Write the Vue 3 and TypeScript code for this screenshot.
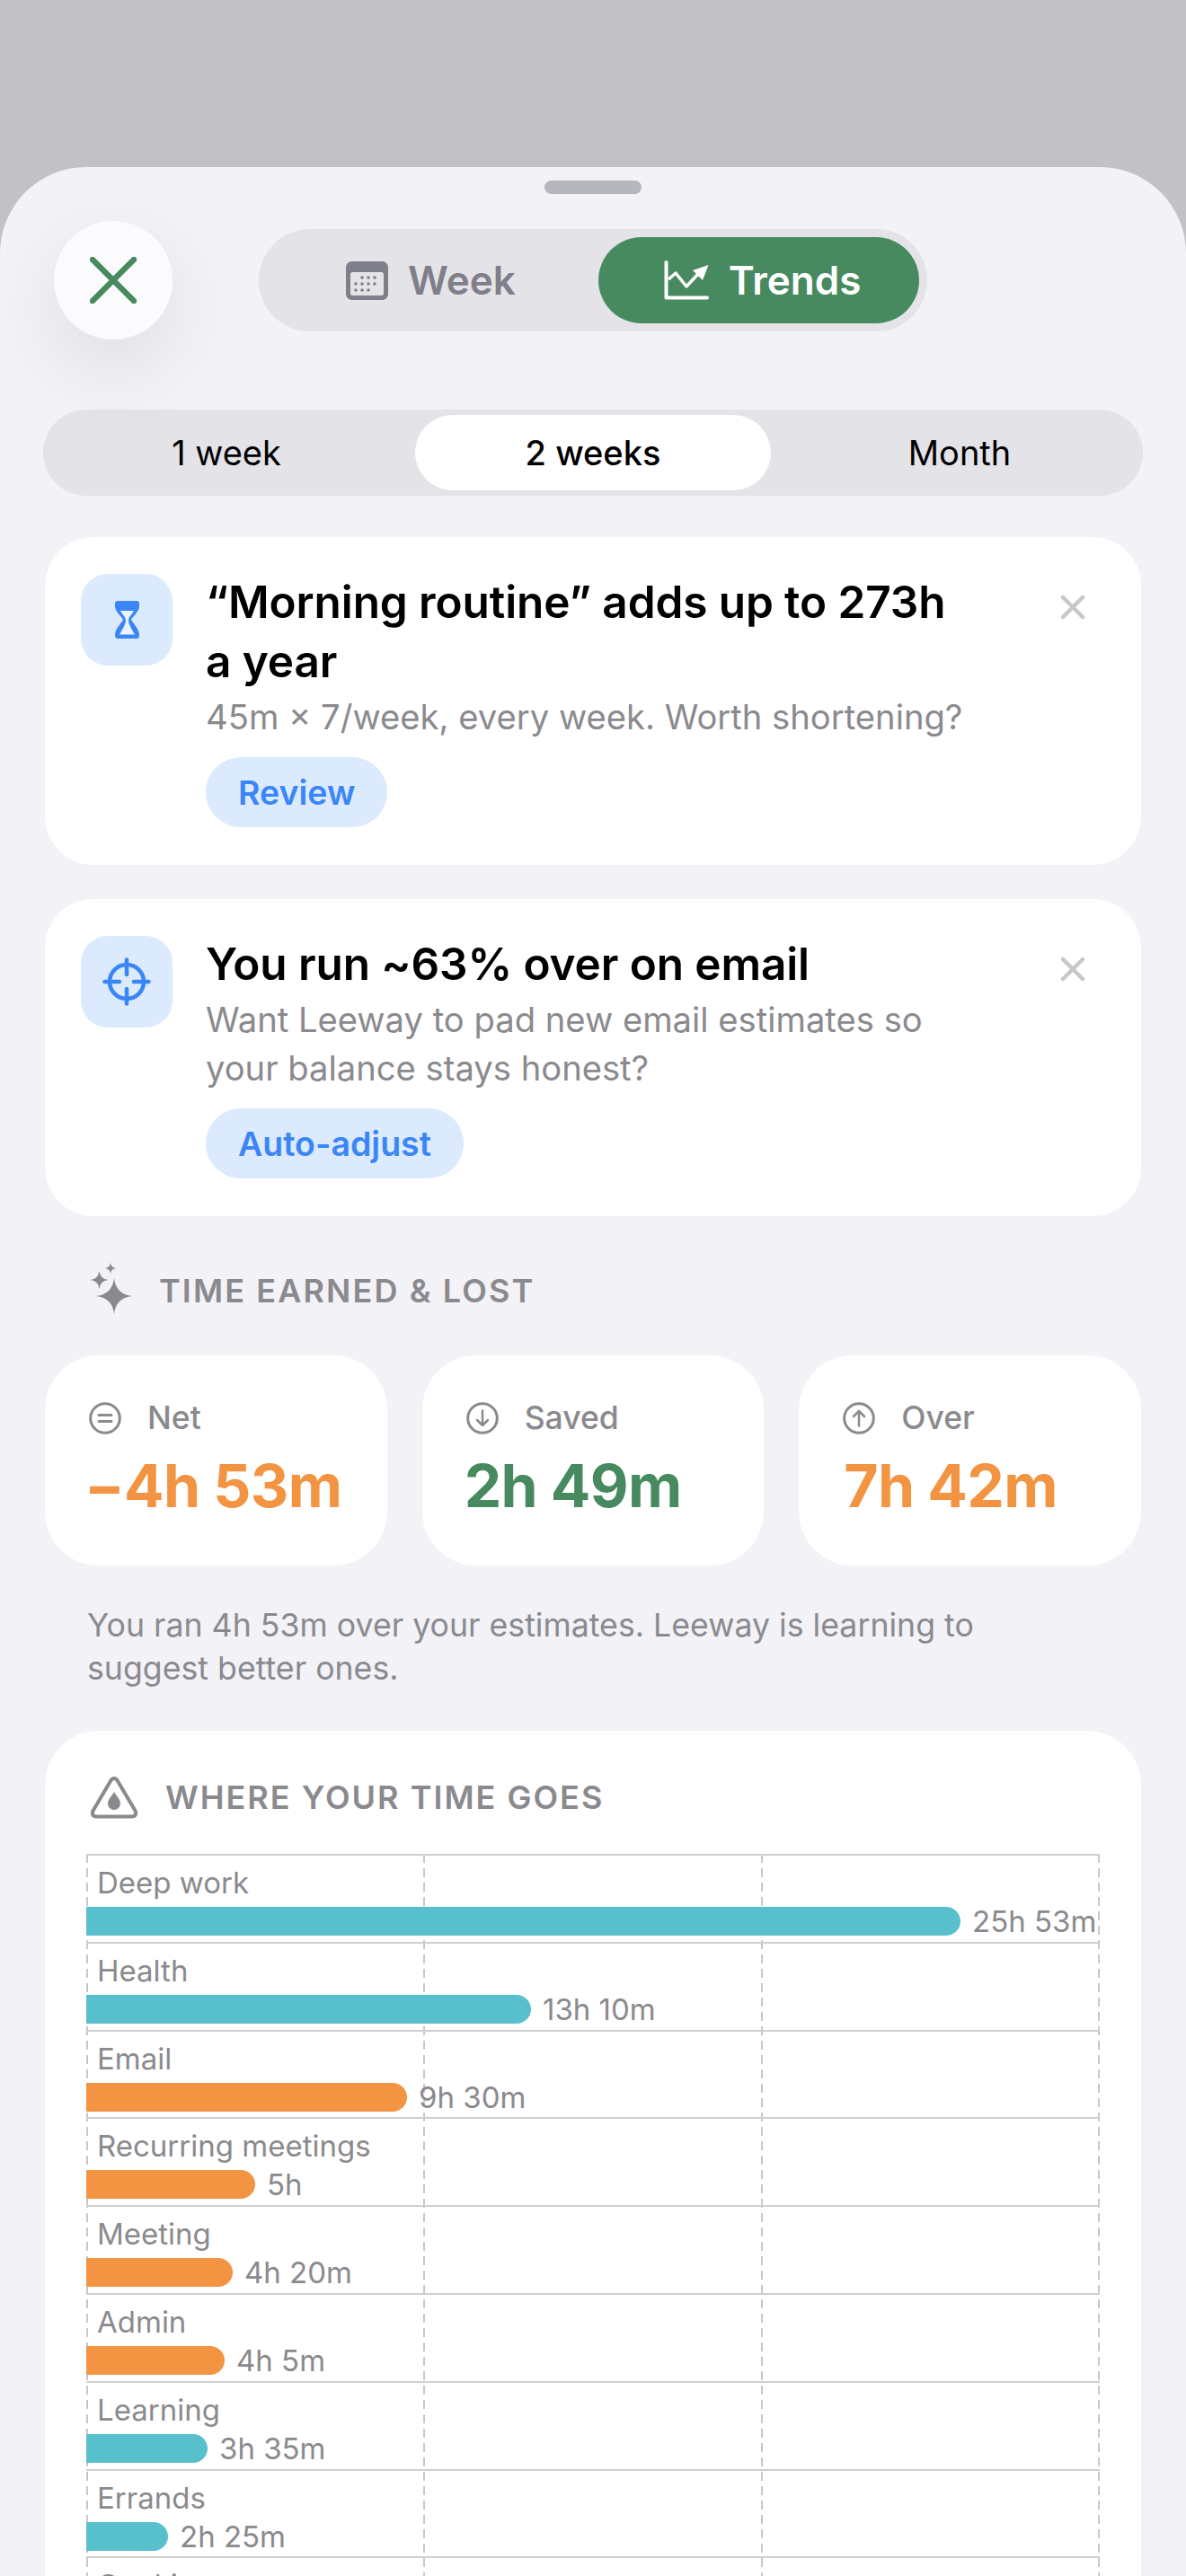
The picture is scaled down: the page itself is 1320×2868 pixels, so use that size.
<script setup lang="ts">
interface Row {
  label: string
  minutes: number
  value: string
  color: 'teal' | 'orange'
}

const rows: Row[] = [
  { label: 'Deep work', minutes: 1553, value: '25h 53m', color: 'teal' },
  { label: 'Health', minutes: 790, value: '13h 10m', color: 'teal' },
  { label: 'Email', minutes: 570, value: '9h 30m', color: 'orange' },
  { label: 'Recurring meetings', minutes: 300, value: '5h', color: 'orange' },
  { label: 'Meeting', minutes: 260, value: '4h 20m', color: 'orange' },
  { label: 'Admin', minutes: 245, value: '4h 5m', color: 'orange' },
  { label: 'Learning', minutes: 215, value: '3h 35m', color: 'teal' },
  { label: 'Errands', minutes: 145, value: '2h 25m', color: 'teal' },
  { label: 'Cooking', minutes: 120, value: '2h', color: 'teal' },
]

const ranges = ['1 week', '2 weeks', 'Month']

function barWidth(minutes: number) {
  return `${Math.round(minutes * 0.6266)}px`
}
</script>

<template>
  <div class="screen">
    <main class="sheet">
      <div class="handle"></div>

      <header class="top">
        <button type="button" class="close" aria-label="Close">
          <svg width="52" height="52" viewBox="0 0 52 52">
            <path d="M3 3 L49 49 M49 3 L3 49" stroke="#478a60" stroke-width="6.5" stroke-linecap="round" fill="none" />
          </svg>
        </button>
        <div class="view-switch">
          <button type="button" class="view-tab">
            <svg width="47" height="43" viewBox="0 0 47 43">
              <rect width="47" height="43" rx="6.5" fill="#7f7f8a" />
              <rect x="5" y="12" width="37" height="26" rx="2.5" fill="#e3e3e8" />
              <g fill="#7f7f8a">
                <circle cx="18" cy="18" r="1.8" />
                <circle cx="25" cy="18" r="1.8" />
                <circle cx="32" cy="18" r="1.8" />
                <circle cx="11" cy="25" r="1.8" />
                <circle cx="18" cy="25" r="1.8" />
                <circle cx="25" cy="25" r="1.8" />
                <circle cx="32" cy="25" r="1.8" />
                <circle cx="11" cy="32" r="1.8" />
                <circle cx="18" cy="32" r="1.8" />
                <circle cx="25" cy="32" r="1.8" />
              </g>
            </svg>
            Week
          </button>
          <button type="button" class="view-tab view-tab--active">
            <svg width="50" height="44" viewBox="0 0 50 44">
              <path d="M2.5 2 V41.500 H48" stroke="#fff" stroke-width="4" stroke-linecap="round" stroke-linejoin="round" fill="none" />
              <path d="M5 21 L13 14 L25 29 L38 15" stroke="#fff" stroke-width="3.5" stroke-linejoin="round" fill="none" />
              <path d="M32 11 L49.500 5 L43 22 Z" fill="#fff" />
            </svg>
            Trends
          </button>
        </div>
      </header>

      <div class="ranges">
        <button
          v-for="r in ranges"
          :key="r"
          type="button"
          class="range"
          :class="{ 'range--active': r === '2 weeks' }"
        >
          {{ r }}
        </button>
      </div>

      <section class="tip tip--first">
        <div class="tip-icon">
          <svg width="27" height="42" viewBox="0 0 27 42">
            <path d="M3 0 H24 Q27 0 27 3 V6 C27 12 20 17 18 21 C20 25 27 31 27 38 Q27 42 24 42 H3 Q0 42 0 38 C0 31 7 25 9 21 C7 17 0 12 0 6 V3 Q0 0 3 0 Z" fill="#3b86f7" />
            <path d="M6 11 H21 C19 15 15 18 15 21.500 C15 26 19 32 22 37.500 H5 C8 32 12 26 12 21.500 C12 18 8 15 6 11 Z" fill="#e9f2fe" />
          </svg>
        </div>
        <div class="tip-body">
          <h2 class="tip-title">“Morning routine” adds up to 273h a year</h2>
          <p class="tip-text">45m × 7/week, every week. Worth shortening?</p>
          <button type="button" class="tip-action">Review</button>
        </div>
        <svg class="tip-dismiss" width="28" height="28" viewBox="0 0 28 28">
          <path d="M3 3 L25 25 M25 3 L3 25" stroke="#c7c7cc" stroke-width="4.5" stroke-linecap="round" />
        </svg>
      </section>

      <section class="tip">
        <div class="tip-icon">
          <svg width="54" height="54" viewBox="0 0 54 54">
            <circle cx="27" cy="27" r="19" fill="none" stroke="#3b86f7" stroke-width="4.5" />
            <path d="M27 2.500 V19 M27 35 V51.500 M2.500 27 H19 M35 27 H51.500" stroke="#3b86f7" stroke-width="4.5" stroke-linecap="round" />
          </svg>
        </div>
        <div class="tip-body">
          <h2 class="tip-title">You run ~63% over on email</h2>
          <p class="tip-text">Want Leeway to pad new email estimates so your balance stays honest?</p>
          <button type="button" class="tip-action">Auto-adjust</button>
        </div>
        <svg class="tip-dismiss" width="28" height="28" viewBox="0 0 28 28">
          <path d="M3 3 L25 25 M25 3 L3 25" stroke="#c7c7cc" stroke-width="4.5" stroke-linecap="round" />
        </svg>
      </section>

      <h3 class="section-head">
        <svg width="50" height="60" viewBox="0 2 50 60">
          <path d="M27 18 Q29 36 47 38 Q29 40 27 58 Q25 40 7 38 Q25 36 27 18 Z" fill="#8a8a8e" />
          <path d="M10.500 10 Q11.500 19 20.500 20 Q11.500 21 10.500 30 Q9.500 21 .500 20 Q9.500 19 10.500 10 Z" fill="#8a8a8e" />
          <path d="M23 1 Q23.700 6.300 29 7 Q23.700 7.700 23 13 Q22.300 7.700 17 7 Q22.300 6.300 23 1 Z" fill="#8a8a8e" />
        </svg>
        TIME EARNED &amp; LOST
      </h3>

      <div class="stats">
        <div class="stat">
          <div class="stat-label">
            <svg width="36" height="36" viewBox="0 0 36 36" fill="none" stroke="#8a8a8e" stroke-width="3">
              <circle cx="18" cy="18" r="16.300" />
              <path d="M11 14.500 H25 M11 21.500 H25" stroke-linecap="round" />
            </svg>
            Net
          </div>
          <div class="stat-value stat-value--orange stat-value--net">−4h 53m</div>
        </div>
        <div class="stat">
          <div class="stat-label">
            <svg width="36" height="36" viewBox="0 0 36 36" fill="none" stroke="#8a8a8e" stroke-width="3">
              <circle cx="18" cy="18" r="16.300" />
              <path d="M18 9.500 V26 M12 20 L18 26 L24 20" stroke-width="2.500" stroke-linecap="round" stroke-linejoin="round" />
            </svg>
            Saved
          </div>
          <div class="stat-value stat-value--green">2h 49m</div>
        </div>
        <div class="stat">
          <div class="stat-label">
            <svg width="36" height="36" viewBox="0 0 36 36" fill="none" stroke="#8a8a8e" stroke-width="3">
              <circle cx="18" cy="18" r="16.300" />
              <path d="M18 26.500 V10 M12 16 L18 10 L24 16" stroke-width="2.500" stroke-linecap="round" stroke-linejoin="round" />
            </svg>
            Over
          </div>
          <div class="stat-value stat-value--orange stat-value--over">7h 42m</div>
        </div>
      </div>

      <p class="note">You ran 4h 53m over your estimates. Leeway is learning to suggest better ones.</p>

      <section class="chart-card">
        <h3 class="chart-head">
          <svg width="54" height="48" viewBox="0 0 54 48">
            <path d="M27 3 Q29.500 3 31 6 L50.500 39 Q53 45 46.500 45.500 H7.500 Q1 45 3.500 39 L23 6 Q24.500 3 27 3 Z" fill="none" stroke="#8a8a8e" stroke-width="4" stroke-linejoin="round" />
            <path d="M27 18 C29 22 34 26 34 31 A7 7 0 0 1 20 31 C20 26 25 22 27 18 Z" fill="#8a8a8e" />
          </svg>
          WHERE YOUR TIME GOES
        </h3>
        <div class="chart">
          <div class="grid-lines">
            <span v-for="n in 4" :key="n" class="grid-line"></span>
          </div>
          <div v-for="row in rows" :key="row.label" class="row">
            <div class="row-label">{{ row.label }}</div>
            <div class="row-bar">
              <span class="bar" :class="`bar--${row.color}`" :style="{ width: barWidth(row.minutes) }"></span>
              <span class="row-value">{{ row.value }}</span>
            </div>
          </div>
        </div>
      </section>
    </main>
  </div>
</template>

<style>
html,
body {
  margin: 0;
  overflow: hidden;
}
</style>

<style scoped>
.screen {
  width: 1320px;
  height: 2868px;
  overflow: hidden;
  background: #c2c1c6;
  font-family: Inter, "Noto Sans", sans-serif;
  color: #000;
}

.sheet {
  margin-top: 186px;
  height: 2682px;
  box-sizing: border-box;
  padding-top: 15px;
  background: #f2f2f7;
  border-radius: 96px 96px 0 0;
  overflow: hidden;
}

button {
  font-family: inherit;
  border: none;
  cursor: pointer;
}

.handle {
  width: 108px;
  height: 15px;
  margin: 0 auto;
  border-radius: 8px;
  background: #b6b6bf;
}

.top {
  position: relative;
  z-index: 1;
  display: grid;
  grid-template-columns: 1fr auto 1fr;
  align-items: center;
  margin-top: 30px;
}

.close {
  display: flex;
  align-items: center;
  justify-content: center;
  width: 132px;
  height: 132px;
  margin-left: 60px;
  padding: 0;
  border-radius: 50%;
  background: #fbfbfe;
  box-shadow: 0 30px 90px rgba(0, 0, 0, 0.09);
}

.view-switch {
  display: flex;
  gap: 12px;
  padding: 9px;
  border-radius: 57px;
  background: #e3e3e8;
}

.view-tab {
  display: flex;
  align-items: center;
  justify-content: center;
  gap: 22px;
  width: 357px;
  height: 96px;
  padding: 0 0 0 8px;
  border-radius: 48px;
  background: transparent;
  color: #7f7f8a;
  font-size: 44px;
  font-weight: 600;
}

.view-tab--active {
  background: #478a60;
  color: #fff;
}

.ranges {
  display: flex;
  gap: 12px;
  margin: 78px 48px 0;
  padding: 6px;
  border-radius: 48px;
  background: #e3e3e8;
}

.range {
  flex: 1;
  height: 84px;
  padding: 0;
  border-radius: 42px;
  background: transparent;
  color: #000;
  font-size: 38px;
  font-weight: 400;
}

.range--active {
  background: #fff;
  font-weight: 500;
}

.tip {
  position: relative;
  display: flex;
  gap: 37px;
  margin: 38px 50px 0;
  padding: 39px 40px 42px;
  border-radius: 54px;
  background: #fff;
}

.tip--first {
  margin-top: 46px;
}

.tip-icon {
  flex: none;
  display: flex;
  align-items: center;
  justify-content: center;
  width: 102px;
  height: 102px;
  margin-top: 2px;
  border-radius: 30px;
  background: #dbeafd;
}

.tip-body {
  width: 860px;
}

.tip-title {
  margin: 0;
  max-width: 830px;
  font-size: 49.5px;
  font-weight: 600;
  line-height: 66px;
  letter-spacing: -0.1px;
}

.tip-text {
  margin: 2px 0 0;
  font-size: 38.2px;
  line-height: 54px;
  color: #8a8a8e;
}

.tip-action {
  display: block;
  height: 78px;
  margin-top: 18px;
  padding: 0 36px;
  border-radius: 39px;
  background: #dbeafd;
  color: #3b86f7;
  font-size: 37.5px;
  font-weight: 600;
}

.tip-dismiss {
  position: absolute;
  top: 64px;
  right: 62px;
}

.section-head {
  display: flex;
  align-items: center;
  gap: 27px;
  margin: 53px 0 0 100px;
  font-size: 36px;
  font-weight: 600;
  letter-spacing: 2.1px;
  color: #8a8a8e;
}

.section-head svg {
  overflow: visible;
}

.stats {
  display: grid;
  grid-template-columns: repeat(3, 1fr);
  gap: 39px;
  margin: 42px 50px 0;
}

.stat {
  height: 234px;
  box-sizing: border-box;
  padding: 48px 49px 0;
  border-radius: 60px;
  background: #fff;
}

.stat-label {
  display: flex;
  align-items: center;
  gap: 29px;
  font-size: 35.5px;
  font-weight: 500;
  color: #8a8a8e;
}

.stat-value {
  margin: 14px 0 0 -2px;
  font-size: 66px;
  font-weight: 700;
  letter-spacing: -0.7px;
  white-space: nowrap;
}

.stat-value--net {
  margin-left: -5px;
}

.stat-value--over {
  margin-left: 1px;
}

.stat-value--orange {
  color: #f29441;
}

.stat-value--green {
  color: #478a60;
}

.note {
  margin: 42px 97px 0;
  font-size: 35.7px;
  line-height: 48px;
  color: #8a8a8e;
}

.chart-card {
  margin: 46px 50px 0;
  padding: 50px 46px 0;
  height: 1000px;
  border-radius: 60px;
  background: #fff;
}

.chart-head {
  display: flex;
  align-items: center;
  gap: 30px;
  margin: 0 0 0 4px;
  font-size: 36px;
  font-weight: 600;
  letter-spacing: 2px;
  color: #8a8a8e;
}

.chart {
  position: relative;
  margin-top: 39px;
}

.grid-lines {
  position: absolute;
  inset: 0;
  display: flex;
  justify-content: space-between;
}

.grid-line {
  width: 2px;
  background: repeating-linear-gradient(to bottom, #c8c8c8 0 10px, transparent 10px 16px);
}

.row {
  position: relative;
  height: 97.8px;
  box-sizing: border-box;
  border-top: 2px solid #cfcfcf;
}

.row-label {
  margin-left: 12px;
  padding-top: 10px;
  height: 43px;
  font-size: 33px;
  line-height: 40px;
  color: #8a8a8e;
}

.row-bar {
  display: flex;
  align-items: center;
  gap: 13px;
}

.bar {
  flex: none;
  height: 32px;
  border-radius: 0 16px 16px 0;
}

.bar--teal {
  background: #58c0cc;
}

.bar--orange {
  background: #f29441;
}

.row-value {
  font-size: 33px;
  color: #8a8a8e;
  white-space: nowrap;
}
</style>
